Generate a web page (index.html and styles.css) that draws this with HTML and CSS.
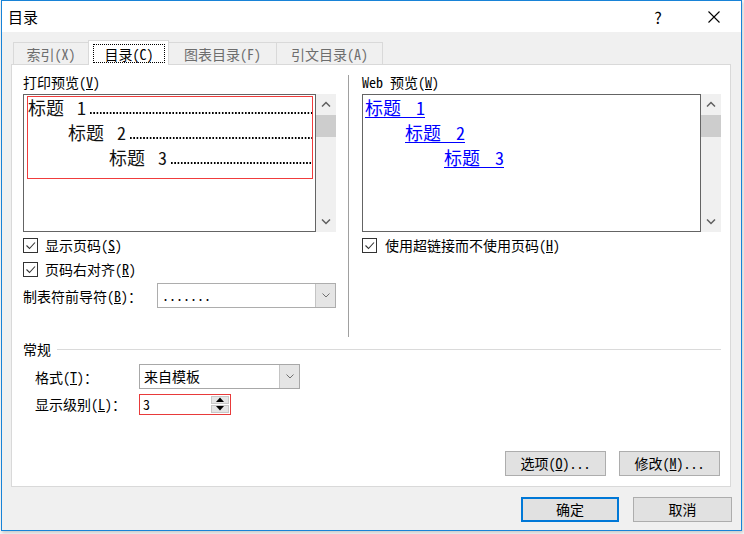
FILE: index.html
```html
<!DOCTYPE html>
<html lang="zh-CN">
<head>
<meta charset="utf-8">
<title>目录</title>
<link rel="stylesheet" href="styles.css">
</head>
<body>
<div class="window">
  <div class="titlebar">
    <span class="title">目录</span>
    <span class="help">?</span>
    <span class="close"><svg width="12" height="12" viewBox="0 0 12 12"><path d="M0.5 0.5L11.5 11.5M11.5 0.5L0.5 11.5" stroke="#000" stroke-width="1.1" fill="none"/></svg></span>
  </div>
  <div class="content">
    <div class="tabs">
      <div class="tab w1">索引(X)</div>
      <div class="tab sel w2"><span class="focus">目录(C)</span></div>
      <div class="tab w3">图表目录(F)</div>
      <div class="tab w4">引文目录(A)</div>
    </div>
    <div class="panel">
      <div class="top">
        <div class="col left">
          <div class="label">打印预览(<u>V</u>)</div>
          <div class="preview">
            <div class="listbox print">
              <div class="redbox">
                <div class="row r1"><span class="t">标题 1</span><span class="leader"></span></div>
                <div class="row r2"><span class="t">标题 2</span><span class="leader"></span></div>
                <div class="row r3"><span class="t">标题 3</span><span class="leader"></span></div>
              </div>
            </div>
            <div class="scroll">
              <div class="sbtn"><svg width="10" height="6" viewBox="0 0 10 6"><path d="M1 5.5L5 1.5L9 5.5" stroke="#606060" stroke-width="1.5" fill="none"/></svg></div>
              <div class="thumb"></div>
              <div class="sfill"></div>
              <div class="sbtn"><svg width="10" height="6" viewBox="0 0 10 6"><path d="M1 0.5L5 4.5L9 0.5" stroke="#606060" stroke-width="1.5" fill="none"/></svg></div>
            </div>
          </div>
          <div class="check first"><span class="box"><svg width="13" height="13" viewBox="0 0 13 13"><path d="M2.5 6.5L5.5 9.5L11 3.5" stroke="#333" stroke-width="1.1" fill="none"/></svg></span><span>显示页码(<u>S</u>)</span></div>
          <div class="check second"><span class="box"><svg width="13" height="13" viewBox="0 0 13 13"><path d="M2.5 6.5L5.5 9.5L11 3.5" stroke="#333" stroke-width="1.1" fill="none"/></svg></span><span>页码右对齐(<u>R</u>)</span></div>
          <div class="field leaderrow">
            <span class="flabel">制表符前导符(<u>B</u>)：</span>
            <div class="select leadsel"><span class="val">.......</span><span class="dbtn"><svg width="8" height="5" viewBox="0 0 8 5"><path d="M0.5 0.5L4 4L7.5 0.5" stroke="#707070" stroke-width="1" fill="none"/></svg></span></div>
          </div>
        </div>
        <div class="vsep"></div>
        <div class="col right">
          <div class="label">Web 预览(<u>W</u>)</div>
          <div class="preview">
            <div class="listbox web">
              <div class="row r1"><a class="lnk">标题 1</a></div>
              <div class="row r2"><a class="lnk">标题 2</a></div>
              <div class="row r3"><a class="lnk">标题 3</a></div>
            </div>
            <div class="scroll">
              <div class="sbtn"><svg width="10" height="6" viewBox="0 0 10 6"><path d="M1 5.5L5 1.5L9 5.5" stroke="#606060" stroke-width="1.5" fill="none"/></svg></div>
              <div class="thumb"></div>
              <div class="sfill"></div>
              <div class="sbtn"><svg width="10" height="6" viewBox="0 0 10 6"><path d="M1 0.5L5 4.5L9 0.5" stroke="#606060" stroke-width="1.5" fill="none"/></svg></div>
            </div>
          </div>
          <div class="check first wide"><span class="box"><svg width="13" height="13" viewBox="0 0 13 13"><path d="M2.5 6.5L5.5 9.5L11 3.5" stroke="#333" stroke-width="1.1" fill="none"/></svg></span><span>使用超链接而不使用页码(<u>H</u>)</span></div>
        </div>
      </div>
      <div class="general">
        <div class="ghead"><span>常规</span><span class="gline"></span></div>
        <div class="field fmt">
          <span class="glabel">格式(<u>T</u>)：</span>
          <div class="select fmtsel"><span class="val">来自模板</span><span class="dbtn"><svg width="8" height="5" viewBox="0 0 8 5"><path d="M0.5 0.5L4 4L7.5 0.5" stroke="#707070" stroke-width="1" fill="none"/></svg></span></div>
        </div>
        <div class="field lvl">
          <span class="glabel">显示级别(<u>L</u>)：</span>
          <div class="spin"><span class="val">3</span><span class="sbtns"><span class="up"><svg width="8" height="5" viewBox="0 0 8 5"><path d="M0 5L4 0.5L8 5Z" fill="#000"/></svg></span><span class="down"><svg width="8" height="5" viewBox="0 0 8 5"><path d="M0 0L4 4.5L8 0Z" fill="#000"/></svg></span></span></div>
        </div>
        <div class="btnrow">
          <button class="btn opt">选项(<u>O</u>)...</button>
          <button class="btn opt">修改(<u>M</u>)...</button>
        </div>
      </div>
    </div>
    <div class="footer">
      <button class="btn ok">确定</button>
      <button class="btn cancel">取消</button>
    </div>
  </div>
</div>
</body>
</html>
```
FILE: styles.css
```css
* { box-sizing: border-box; }
html, body { margin: 0; padding: 0; }
body {
  background: #f6f6f6;
  width: 744px;
  height: 534px;
  overflow: hidden;
  font-family: "Noto Sans Mono CJK SC", "Noto Sans CJK SC", "DejaVu Sans Mono", monospace;
  font-size: 14px;
  color: #000;
}
.window {
  margin-left: 1px;
  width: 741px;
  height: 531px;
  border: 1px solid #1883d7;
  background: #f0f0f0;
  box-shadow: 1px 2px 3px rgba(0,0,0,0.18);
  display: flex;
  flex-direction: column;
}
.titlebar {
  height: 31px;
  background: #fff;
  display: flex;
  align-items: center;
  flex: none;
}
.title {
  font-family: "Noto Sans CJK SC", sans-serif;
  font-size: 15px;
  padding-left: 6px;
  flex: 1;
}
.help {
  font-family: "Noto Sans CJK SC", sans-serif;
  font-size: 16px;
  width: 16px;
  text-align: center;
}
.close {
  display: flex;
  width: 12px;
  height: 12px;
  margin-left: 42px;
  margin-right: 21px;
}
.content {
  flex: 1;
  display: flex;
  flex-direction: column;
  padding-top: 8px;
}
.tabs {
  display: flex;
  align-items: flex-end;
  height: 24px;
  margin-left: 11px;
  position: relative;
  z-index: 2;
}
.tab {
  height: 22px;
  border: 1px solid #d9d9d9;
  border-bottom: none;
  background: #f0f0f0;
  color: #6d6d6d;
  display: flex;
  align-items: center;
  justify-content: center;
  line-height: 20px;
}
.tab + .tab { margin-left: -1px; }
.tab.sel {
  height: 25px;
  margin-bottom: -1px;
  background: #fff;
  color: #000;
  padding: 3px 3px 2px 4px;
  position: relative;
  z-index: 3;
}
.focus {
  flex: 1;
  align-self: stretch;
  border: 1px dotted #000;
  display: flex;
  align-items: center;
  justify-content: center;
}
.w1 { width: 76px; }
.w2 { width: 81px; }
.w3 { width: 109px; }
.w4 { width: 107px; }
.panel {
  margin: 0 10px 0 9px;
  border: 1px solid #d9d9d9;
  background: #fff;
  padding: 8px 9px 10px 11px;
  position: relative;
  z-index: 1;
}
.top {
  display: flex;
  height: 264px;
}
.col.left { width: 313px; }
.col.right { width: 359px; }
.vsep {
  width: 1px;
  background: #a0a0a0;
  margin: 2px 13px 0 12px;
}
.label {
  height: 18px;
  line-height: 18px;
  margin-bottom: 3px;
  white-space: nowrap;
}
u { text-decoration: underline; text-underline-offset: 1px; }
.preview {
  display: flex;
  height: 138px;
}
.listbox {
  border: 1px solid #646464;
  background: #fff;
  height: 138px;
}
.listbox.print {
  width: 293px;
  padding: 1px 2px 0 3px;
}
.listbox.web {
  width: 339px;
  padding: 2px 0 0 2px;
}
.redbox {
  border: 1px solid #f03c3c;
  height: 83px;
}
.row {
  display: flex;
  align-items: flex-start;
  height: 25px;
  line-height: 20px;
  font-size: 18px;
  white-space: nowrap;
}
.print .row .t { word-spacing: 4px; color: #111; }
.print .r2 { padding-left: 40px; }
.print .r3 { padding-left: 81px; }
.leader {
  flex: 1;
  height: 2px;
  margin-top: 15px;
  margin-left: 4px;
  background-image: linear-gradient(to right, #000 2px, transparent 2px);
  background-size: 3.3px 2px;
  background-repeat: repeat-x;
}
.web .r2 { padding-left: 40px; }
.web .r3 { padding-left: 79px; }
.lnk {
  color: #0000ff;
  text-decoration: underline;
  text-underline-offset: 2px;
  word-spacing: 6px;
}
.scroll {
  width: 20px;
  background: #f0f0f0;
  display: flex;
  flex-direction: column;
}
.sbtn {
  height: 20px;
  display: flex;
  align-items: center;
  justify-content: center;
}
.thumb {
  height: 22px;
  background: #cdcdcd;
  margin-top: 1px;
}
.sfill { flex: 1; }
.check {
  display: flex;
  align-items: center;
  height: 18px;
  line-height: 18px;
  white-space: nowrap;
}
.check.first { margin-top: 4px; }
.check.second { margin-top: 6px; }
.box {
  width: 15px;
  height: 15px;
  border: 1px solid #333;
  background: #fff;
  display: flex;
  align-items: center;
  justify-content: center;
  margin-right: 7px;
  flex: none;
}
.check.wide .box { margin-right: 8px; }
.field {
  display: flex;
  align-items: center;
  white-space: nowrap;
}
.leaderrow {
  margin-top: 5px;
  height: 25px;
}
.flabel { width: 134px; }
.select {
  display: flex;
  height: 25px;
  border: 1px solid #adadad;
  background: #fff;
}
.leadsel { width: 179px; }
.select .val {
  flex: 1;
  padding-left: 4px;
  line-height: 23px;
}
.dbtn {
  width: 20px;
  background: #e5e5e5;
  border-left: 1px solid #c4c4c4;
  display: flex;
  align-items: center;
  justify-content: center;
}
.general { margin-top: 3px; }
.ghead {
  display: flex;
  align-items: center;
  height: 18px;
  line-height: 18px;
}
.gline {
  flex: 1;
  height: 1px;
  background: #dadada;
  margin-left: 6px;
}
.fmt {
  margin-top: 6px;
  height: 25px;
  padding-left: 12px;
}
.glabel { width: 104px; }
.fmtsel { width: 161px; border-color: #a8a8a8; }
.lvl {
  margin-top: 4px;
  height: 22px;
  padding-left: 12px;
}
.spin {
  width: 92px;
  height: 21px;
  border: 1px solid #e83a3a;
  display: flex;
  background: #fff;
}
.spin .val {
  flex: 1;
  padding-left: 3px;
  line-height: 19px;
}
.sbtns {
  width: 19px;
  display: flex;
  flex-direction: column;
  padding: 1px 1px 1px 0;
  gap: 1px;
}
.sbtns span {
  flex: 1;
  background: #e5e5e5;
  border: 1px solid #c8c8c8;
  display: flex;
  align-items: center;
  justify-content: center;
}
.btnrow {
  margin-top: 36px;
  display: flex;
  justify-content: flex-end;
  gap: 13px;
  padding-right: 1px;
}
.btn {
  font-family: inherit;
  font-size: 14px;
  color: #000;
  height: 25px;
  background: #e1e1e1;
  border: 1px solid #adadad;
  padding: 0;
  line-height: 23px;
  white-space: nowrap;
}
.btn.opt { width: 101px; }
.footer {
  display: flex;
  justify-content: flex-end;
  gap: 14px;
  margin-top: 10px;
  padding-right: 9px;
}
.btn.ok {
  width: 98px;
  border: 2px solid #0078d7;
  line-height: 21px;
}
.btn.cancel { width: 99px; }
```
